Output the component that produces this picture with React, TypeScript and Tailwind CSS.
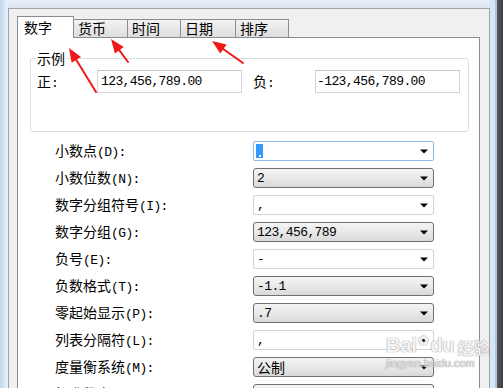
import React from "react";

const CJK_RE = /[\u2E80-\u9FFF\uFF00-\uFFEF\u3000-\u303F]+|[^\u2E80-\u9FFF\uFF00-\uFFEF\u3000-\u303F]+/g;
const IS_CJK = /[\u2E80-\u9FFF\uFF00-\uFFEF\u3000-\u303F]/;

function Mixed({ text }: { text: string }) {
  const parts = text.match(CJK_RE) || [];
  return (
    <span className="inline-flex items-baseline whitespace-pre text-black leading-none">
      {parts.map((p, i) =>
        IS_CJK.test(p) ? (
          <span key={i} className="font-['Noto_Sans_CJK_SC',sans-serif] text-[14px] leading-none">
            {p}
          </span>
        ) : (
          <span key={i} className="font-['Liberation_Mono',monospace] text-[13px] tracking-[-0.6px] leading-none">
            {p}
          </span>
        )
      )}
    </span>
  );
}

function DropArrow() {
  return (
    <svg width="8" height="5" viewBox="0 0 8 5" className="shrink-0">
      <polygon points="0,0.5 8,0.5 4,4.5" fill="#000" />
    </svg>
  );
}

type Kind = "edit" | "list" | "focus";

function Combo({ value, kind }: { value: string; kind: Kind }) {
  if (kind === "list") {
    return (
      <div className="w-[181px] h-[20px] flex items-center justify-between pl-[3px] pr-[5px] rounded-[3px] border border-[#707070] bg-gradient-to-b from-[#f4f4f4] via-[#e9e9e9] to-[#d9d9d9]">
        <Mixed text={value} />
        <DropArrow />
      </div>
    );
  }
  if (kind === "focus") {
    return (
      <div className="w-[181px] h-[20px] flex items-center justify-between pl-[2px] pr-[5px] rounded-[2px] border border-[#8fb8e4] bg-white">
        <span className="w-[7px] h-[14px] bg-[#3399ff] flex items-end justify-center pb-[1px]">
          <span className="w-[2px] h-[2px] bg-white" />
        </span>
        <DropArrow />
      </div>
    );
  }
  return (
    <div className="w-[181px] h-[20px] flex items-center justify-between pl-[3px] pr-[5px] rounded-[2px] border border-[#d2d2d2] bg-white">
      <Mixed text={value} />
      <DropArrow />
    </div>
  );
}

const rows: { label: string; value: string; kind: Kind }[] = [
  { label: "小数点(D):", value: ".", kind: "focus" },
  { label: "小数位数(N):", value: "2", kind: "list" },
  { label: "数字分组符号(I):", value: ",", kind: "edit" },
  { label: "数字分组(G):", value: "123,456,789", kind: "list" },
  { label: "负号(E):", value: "-", kind: "edit" },
  { label: "负数格式(T):", value: "-1.1", kind: "list" },
  { label: "零起始显示(P):", value: ".7", kind: "list" },
  { label: "列表分隔符(L):", value: ",", kind: "edit" },
  { label: "度量衡系统(M):", value: "公制", kind: "list" },
  { label: "标准数字(S):", value: "0123456789", kind: "list" },
];

function Arrow({ x1, y1, x2, y2 }: { x1: number; y1: number; x2: number; y2: number }) {
  const dx = x2 - x1;
  const dy = y2 - y1;
  const len = Math.sqrt(dx * dx + dy * dy);
  const ux = dx / len;
  const uy = dy / len;
  const hl = 14;
  const hw = 5.5;
  const bx = x2 - hl * ux;
  const by = y2 - hl * uy;
  const nx = -uy;
  const ny = ux;
  const pts = `${x2},${y2} ${bx + hw * nx},${by + hw * ny} ${bx - hw * nx},${by - hw * ny}`;
  return (
    <g>
      <line x1={x1} y1={y1} x2={bx + 2 * ux} y2={by + 2 * uy} stroke="#f21818" strokeWidth="2" strokeLinecap="round" />
      <polygon points={pts} fill="#f21818" />
    </g>
  );
}

const tabCls =
  "h-[18px] flex items-center bg-gradient-to-b from-[#f3f3f3] to-[#dedede] border-t border-r border-[#898c95] pl-[4px] pb-[1px]";

export default function App() {
  return (
    <div className="relative w-[503px] h-[388px] overflow-hidden flex bg-[#dfe8f3]">
      {/* left frame */}
      <div className="w-[8px] shrink-0 bg-gradient-to-r from-[#c2d6ee] to-[#eaf1f9]" />
      {/* middle */}
      <div className="w-[482px] shrink-0 flex flex-col">
        <div className="h-[8px] shrink-0 bg-gradient-to-b from-[#e9eff7] to-[#dbe5f1]" />
        <div className="flex-1 flex flex-col bg-[#f0f0f0] border-l border-t border-r border-[#9da3ab] pl-[8px] pt-[7px] pr-[9px]">
          {/* tabs */}
          <div className="h-[21px] flex items-end shrink-0">
            <div className="relative z-10 w-[57px] h-[22px] -mb-px flex items-center bg-white border-t border-l border-r border-[#898c95] pl-[6px] pb-[1px]">
              <Mixed text="数字" />
            </div>
            <div className={`w-[54px] ${tabCls}`}>
              <Mixed text="货币" />
            </div>
            <div className={`w-[53px] ${tabCls}`}>
              <Mixed text="时间" />
            </div>
            <div className={`w-[55px] ${tabCls}`}>
              <Mixed text="日期" />
            </div>
            <div className={`w-[53px] ${tabCls}`}>
              <Mixed text="排序" />
            </div>
          </div>
          {/* panel */}
          <div className="flex-1 bg-white border border-[#898c95] pl-[12px] pr-[10px] pt-[20px]">
            {/* group box */}
            <div className="relative h-[74px] border border-[#d5dfe5] rounded-[3px] pl-[6px] pt-[11px]">
              <div className="absolute left-[5px] top-[-9px] h-[15px] flex items-center bg-white px-[1px]">
                <Mixed text="示例" />
              </div>
              <div className="flex items-center h-[23px]">
                <div className="w-[60px] shrink-0 flex items-center">
                  <Mixed text="正:" />
                </div>
                <div className="w-[145px] shrink-0 h-[23px] flex items-center pl-[3px] border border-[#d4d4d4] border-t-[#c4c4c4]">
                  <Mixed text="123,456,789.00" />
                </div>
                <div className="w-[11px] shrink-0" />
                <div className="w-[62px] shrink-0 flex items-center">
                  <Mixed text="负:" />
                </div>
                <div className="w-[145px] shrink-0 h-[23px] flex items-center pl-[1px] border border-[#d4d4d4] border-t-[#c4c4c4]">
                  <Mixed text="-123,456,789.00" />
                </div>
              </div>
            </div>
            {/* rows */}
            <div className="mt-[9px] pl-[25px] flex flex-col gap-[7px]">
              {rows.map((r) => (
                <div key={r.label} className="flex items-center h-[20px]">
                  <div className="w-[198px] shrink-0 flex items-center">
                    <Mixed text={r.label} />
                  </div>
                  <Combo value={r.value} kind={r.kind} />
                </div>
              ))}
            </div>
          </div>
        </div>
      </div>
      {/* right frame */}
      <div className="w-[5px] shrink-0 bg-[#d7e5f5]" />
      <div className="w-[2px] shrink-0 bg-[#aec6e2]" />
      <div className="w-[6px] shrink-0 bg-gradient-to-r from-[#5a5a5a] to-[#3e3e3e]" />

      {/* watermark */}
      <div className="absolute left-[386px] top-[334px] flex flex-col items-start pointer-events-none">
        <div className="flex items-end gap-[1px] font-['Liberation_Sans',sans-serif] text-[20px] font-bold leading-none text-[#f4f4f4] [text-shadow:0_0_1px_#9a9a9a,0_0_1px_#9a9a9a]">
          <span>Bai</span>
          <span className="text-[13px] mb-[8px]">✿</span>
          <span>du</span>
          <span className="ml-[2px] font-['Noto_Sans_CJK_SC',sans-serif] text-[16px]">经验</span>
        </div>
        <div className="font-['Liberation_Sans',sans-serif] text-[11px] leading-none mt-[3px] text-[#e6e6e6] [text-shadow:0_0_1px_#9a9a9a,0_0_1px_#9a9a9a]">
          jingyan.baidu.com
        </div>
      </div>

      {/* red annotation arrows */}
      <svg className="absolute left-0 top-0 pointer-events-none" width="503" height="388" viewBox="0 0 503 388">
        <Arrow x1={96} y1={92} x2={69} y2={48} />
        <Arrow x1={128} y1={62} x2={111} y2={39} />
        <Arrow x1={243} y1={63} x2={212} y2={41} />
      </svg>
    </div>
  );
}
